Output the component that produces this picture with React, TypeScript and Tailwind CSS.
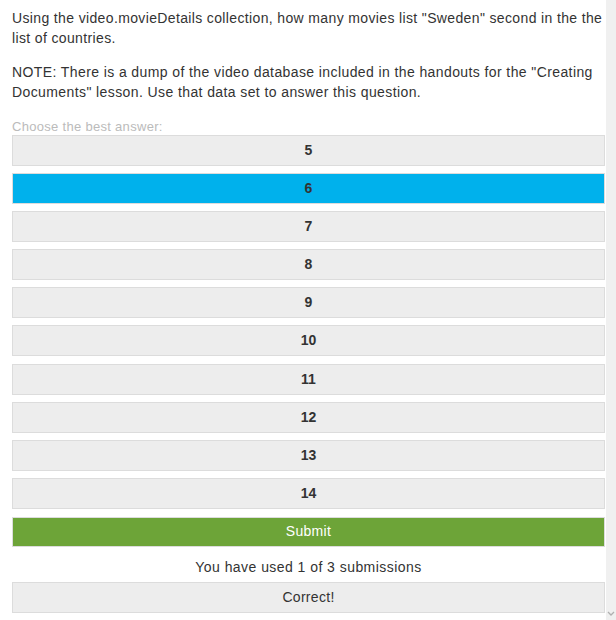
const answers = ["5", "6", "7", "8", "9", "10", "11", "12", "13", "14"];

export default function App() {
  const selected = "6";

  return (
    <div className="flex h-[620px] w-[616px] bg-white font-['Liberation_Sans',Arial,sans-serif] text-[#333]">
      <div className="flex flex-1 flex-col pl-3 pt-2">
        <p className="-mr-[4px] text-[14px] leading-5 tracking-[0.36px]">
          Using the video.movieDetails collection, how many movies list "Sweden" second in the the
          list of countries.
        </p>
        <p className="mt-[14px] text-[14px] leading-5 tracking-[0.4px]">
          NOTE: There is a dump of the video database included in the handouts for the "Creating
          Documents" lesson. Use that data set to answer this question.
        </p>

        <div className="mt-[17px] text-[13px] leading-4 tracking-[0.3px] text-[#bbb]">Choose the best answer:</div>

        <div className="flex flex-col gap-[7.1px]">
          {answers.map((a) => (
            <button
              key={a}
              className={
                a === selected
                  ? "flex h-[31px] items-center justify-center border border-[#dcdcdc] bg-[#00b1ec] text-[14px] font-bold"
                  : "flex h-[31px] items-center justify-center border border-[#dcdcdc] bg-[#ededed] text-[14px] font-bold"
              }
            >
              {a}
            </button>
          ))}
        </div>

        <button className="mt-[8px] flex h-[30px] items-center justify-center border border-[#dcdcdc] bg-[#6da438] text-[14px] tracking-[0.3px] text-white">
          Submit
        </button>

        <div className="mt-[10px] text-center text-[14px] leading-5 tracking-[0.45px]">You have used 1 of 3 submissions</div>

        <div className="mt-[5px] flex h-[31px] items-center justify-center border border-[#dcdcdc] bg-[#ededed] text-[14px] tracking-[0.3px]">
          Correct!
        </div>
      </div>

      {/* scrollbar strip */}
      <div className="ml-px flex w-[10px] flex-col justify-end bg-[#f0f0f0] pb-[2px]">
        <svg width="10" height="8" viewBox="0 0 10 8">
          <path d="M2 2 L5 5 L8 2" fill="none" stroke="#b0b0b0" strokeWidth="1.3" />
        </svg>
      </div>
    </div>
  );
}
